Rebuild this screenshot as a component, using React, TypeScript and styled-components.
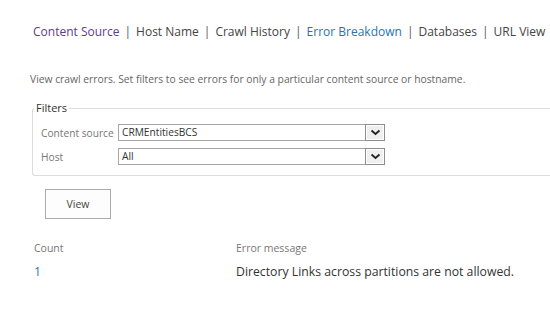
import styled, { createGlobalStyle } from "styled-components";

const GlobalStyle = createGlobalStyle`
  html, body {
    margin: 0;
    padding: 0;
    background: #ffffff;
    font-family: "Open Sans", "Liberation Sans", sans-serif;
    overflow: hidden;
  }
`;

const Page = styled.div`
  width: 550px;
  height: 310px;
  padding-top: 22px;
  box-sizing: border-box;
`;

const Nav = styled.nav`
  display: flex;
  align-items: center;
  padding-left: 33px;
  font-size: 12px;
  line-height: 20px;
  white-space: nowrap;
  color: #444444;
`;

const NavItem = styled.span<{ $tone?: "visited" | "active" }>`
  color: ${(p) =>
    p.$tone === "visited" ? "#5f3b8c" : p.$tone === "active" ? "#1f74b4" : "#444444"};
`;

const Sep = styled.span`
  color: #555555;
  margin: 0 5px;
`;

const Intro = styled.p`
  margin: 30px 0 0 30px;
  font-size: 10.3px;
  line-height: 14px;
  color: #666666;
  white-space: nowrap;
`;

const Filters = styled.fieldset`
  margin: 15px -10px 0 32px;
  padding: 0 0 10px 8px;
  border: 1px solid #dcdcdc;
  border-right: none;
  border-radius: 3px 0 0 3px;
`;

const Legend = styled.legend`
  padding: 0 2px;
  margin-left: -7px;
  font-size: 11px;
  line-height: 14px;
  color: #333333;
`;

const FieldGrid = styled.div`
  display: grid;
  grid-template-columns: 77px auto;
  row-gap: 7px;
  align-items: center;
  margin-top: 9px;
`;

const Label = styled.span`
  font-size: 10.2px;
  color: #777777;
  white-space: nowrap;
`;

const Select = styled.div`
  display: flex;
  width: 267px;
  height: 17px;
  box-sizing: border-box;
  border: 1px solid #a6a6a6;
  background: #ffffff;
`;

const SelectValue = styled.span`
  flex: 1;
  padding-left: 3px;
  font-size: 10.2px;
  line-height: 15px;
  color: #333333;
`;

const SelectButton = styled.span`
  width: 18px;
  display: flex;
  align-items: center;
  justify-content: center;
  background: #efefef;
  box-shadow: inset 0 0 0 1px #ffffff;
  margin: -1px -1px -1px 0;
  border: 1px solid #8e8e8e;
`;

const ViewButton = styled.button`
  display: block;
  margin: 13px 0 0 45px;
  width: 66px;
  height: 30px;
  background: #fdfdfd;
  border: 1px solid #ababab;
  font-family: inherit;
  font-size: 10.5px;
  color: #444444;
  padding: 0;
`;

const Table = styled.div`
  display: grid;
  grid-template-columns: 202px auto;
  padding-left: 34px;
  margin-top: 22px;
`;

const HeadCell = styled.span`
  font-size: 10.5px;
  line-height: 14px;
  color: #777777;
`;

const Cell = styled.span<{ $link?: boolean }>`
  margin-top: 8px;
  font-size: 12.25px;
  line-height: 18px;
  color: ${(p) => (p.$link ? "#1f74b4" : "#333333")};
  white-space: nowrap;
`;

const Chevron = () => (
  <svg width="11" height="7" viewBox="0 0 11 7">
    <path d="M1.5 1.5 L5.5 5 L9.5 1.5" fill="none" stroke="#222" strokeWidth="1.8" />
  </svg>
);

export default function App() {
  return (
    <Page>
      <GlobalStyle />
      <Nav>
        <NavItem $tone="visited">Content Source</NavItem>
        <Sep>|</Sep>
        <NavItem>Host Name</NavItem>
        <Sep>|</Sep>
        <NavItem>Crawl History</NavItem>
        <Sep>|</Sep>
        <NavItem $tone="active">Error Breakdown</NavItem>
        <Sep>|</Sep>
        <NavItem>Databases</NavItem>
        <Sep>|</Sep>
        <NavItem>URL View</NavItem>
      </Nav>
      <Intro>
        View crawl errors. Set filters to see errors for only a particular content source or hostname.
      </Intro>
      <Filters>
        <Legend>Filters</Legend>
        <FieldGrid>
          <Label>Content source</Label>
          <Select>
            <SelectValue>CRMEntitiesBCS</SelectValue>
            <SelectButton>
              <Chevron />
            </SelectButton>
          </Select>
          <Label>Host</Label>
          <Select>
            <SelectValue>All</SelectValue>
            <SelectButton>
              <Chevron />
            </SelectButton>
          </Select>
        </FieldGrid>
      </Filters>
      <ViewButton>View</ViewButton>
      <Table>
        <HeadCell>Count</HeadCell>
        <HeadCell>Error message</HeadCell>
        <Cell $link>1</Cell>
        <Cell>Directory Links across partitions are not allowed.</Cell>
      </Table>
    </Page>
  );
}
